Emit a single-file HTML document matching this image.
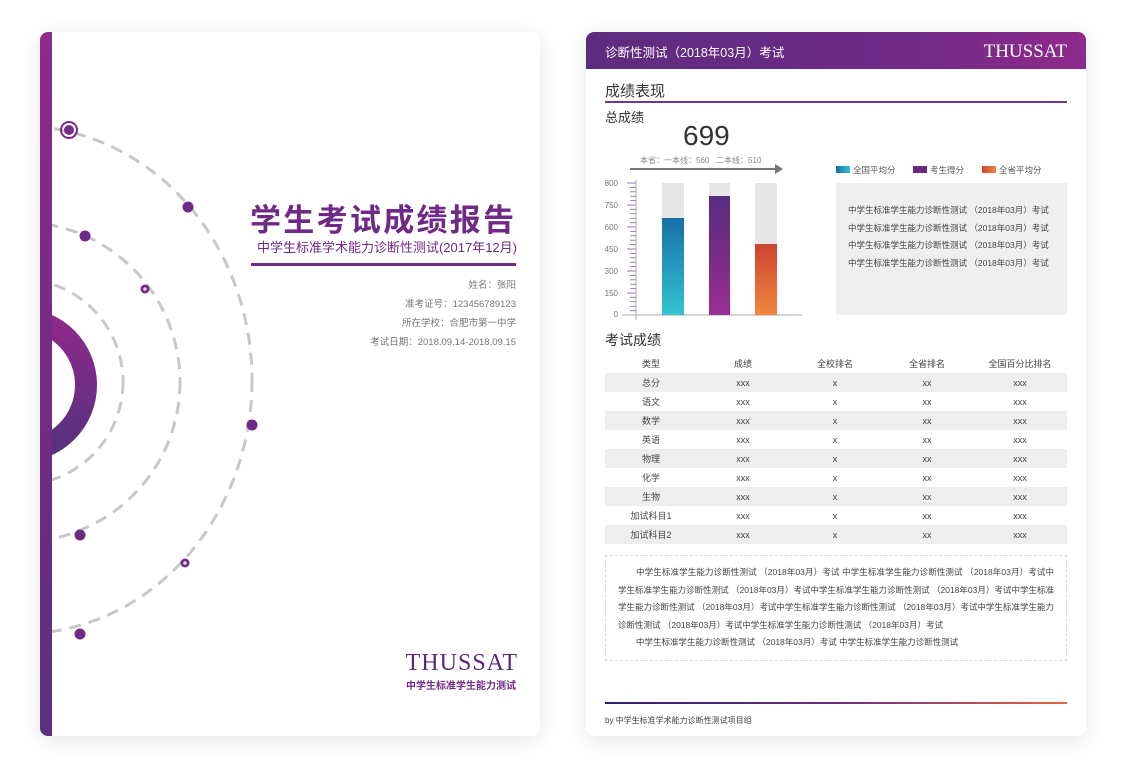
<!DOCTYPE html>
<html><head><meta charset="utf-8"><style>
*{margin:0;padding:0;box-sizing:border-box}
body{width:1126px;height:784px;background:#fff;position:relative;overflow:hidden;font-family:"Liberation Sans","Noto Sans CJK SC",sans-serif;}
.card{position:absolute;background:#fff;border-radius:8px;box-shadow:0 4px 22px rgba(0,0,0,0.10);overflow:hidden}
.a{position:absolute;white-space:nowrap}
.r{text-align:right}
table{border-collapse:collapse;width:462px;font-size:9px;color:#444}
td,th{height:19px;text-align:center;font-weight:normal}
tbody tr:nth-child(odd){background:#eeeeee}
</style></head><body>
<div class="card" style="left:40px;top:32px;width:500px;height:704px">
 <svg class="a" style="left:0;top:0" width="500" height="704">
  <defs><linearGradient id="rg" x1="0" y1="0" x2="0" y2="1"><stop offset="0" stop-color="#8e2a8c"/><stop offset="1" stop-color="#56317e"/></linearGradient></defs>
  <g transform="translate(-40,-32)">
  <ellipse cx="20" cy="380" rx="232" ry="254" fill="none" stroke="#c8c8c8" stroke-width="3" stroke-dasharray="12 8"/>
  <circle cx="20" cy="382" r="160" fill="none" stroke="#c8c8c8" stroke-width="3" stroke-dasharray="12 8"/>
  <circle cx="20" cy="382" r="103" fill="none" stroke="#c8c8c8" stroke-width="3" stroke-dasharray="12 8"/>
  <circle cx="20" cy="385" r="66" fill="none" stroke="url(#rg)" stroke-width="22"/>
  <circle cx="69" cy="130" r="8" fill="none" stroke="#7a2a88" stroke-width="2"/>
  <circle cx="69" cy="130" r="5" fill="#7a2a88"/>
  <circle cx="188" cy="207" r="5.5" fill="#6e2a86"/>
  <circle cx="85" cy="236" r="5.5" fill="#6e2a86"/>
  <circle cx="145" cy="289" r="4.5" fill="#6e2a86"/><circle cx="145" cy="289" r="1.8" fill="#ddd"/>
  <circle cx="252" cy="425" r="5.5" fill="#6e2a86"/>
  <circle cx="80" cy="535" r="5.5" fill="#6e2a86"/>
  <circle cx="185" cy="563" r="4.5" fill="#6e2a86"/><circle cx="185" cy="563" r="1.8" fill="#ddd"/>
  <circle cx="80" cy="634" r="5.5" fill="#6e2a86"/>
  </g>
 </svg>
 <div class="a" style="left:0;top:0;width:12px;height:704px;background:linear-gradient(#8e2a8c,#5a2e80)"></div>
 <div class="a" style="left:210px;top:163px;font-size:31px;color:#6f2a88;font-weight:bold;letter-spacing:2.3px">学生考试成绩报告</div>
 <div class="a r" style="right:23px;top:205px;font-size:13px;color:#6f2a88">中学生标准学术能力诊断性测试(2017年12月)</div>
 <div class="a" style="left:211px;top:231px;width:265px;height:3px;background:#6f2a88"></div>
 <div class="a r" style="right:24px;top:244px;font-size:9.5px;color:#777;line-height:19px">姓名：张阳<br>准考证号：123456789123<br>所在学校：合肥市第一中学<br>考试日期：2018.09.14-2018.09.15</div>
 <div class="a r" style="right:22px;top:618px;font-family:'Liberation Serif',serif;font-size:24px;color:#5a2a7e;letter-spacing:1px">THUSSAT</div>
 <div class="a r" style="right:24px;top:645px;font-size:10px;color:#6f2a88;font-weight:bold">中学生标准学生能力测试</div>
</div>

<div class="card" style="left:586px;top:32px;width:500px;height:704px">
 <div class="a" style="left:0;top:0;width:500px;height:37px;background:linear-gradient(90deg,#5d2c7f,#6e2a86 60%,#8e2a8c)"></div>
 <div class="a" style="left:19px;top:10px;font-size:12.5px;color:#fff">诊断性测试（2018年03月）考试</div>
 <div class="a" style="right:19px;top:9px;font-family:'Liberation Serif',serif;font-size:19px;color:#fff">THUSSAT</div>
 <div class="a" style="left:19px;top:48px;font-size:15px;color:#333">成绩表现</div>
 <div class="a" style="left:19px;top:69px;width:462px;height:2px;background:#6f3a8a"></div>
 <div class="a" style="left:19px;top:75px;font-size:13px;color:#333">总成绩</div>
 <div class="a" style="left:97px;top:88px;font-size:28px;color:#333">699</div>
 <div class="a" style="left:54px;top:123px;font-size:8px;color:#888">本省：一本线：560&nbsp;&nbsp;&nbsp;二本线：510</div>
 <div class="a" style="left:44px;top:136px;width:146px;height:2px;background:#777"></div>
 <div class="a" style="left:189px;top:132px;width:0;height:0;border-left:8px solid #777;border-top:5px solid transparent;border-bottom:5px solid transparent"></div>
 <svg class="a" style="left:0;top:108px" width="230" height="180">
  <defs>
   <linearGradient id="b1" x1="0" y1="0" x2="0" y2="1"><stop offset="0" stop-color="#1670a8"/><stop offset="1" stop-color="#35c3d2"/></linearGradient>
   <linearGradient id="b2" x1="0" y1="0" x2="0" y2="1"><stop offset="0" stop-color="#572c7e"/><stop offset="1" stop-color="#9a2d92"/></linearGradient>
   <linearGradient id="b3" x1="0" y1="0" x2="0" y2="1"><stop offset="0" stop-color="#cc4530"/><stop offset="1" stop-color="#f28640"/></linearGradient>
  </defs>
  <g font-size="8" fill="#777" text-anchor="end">
   <text x="32" y="46">800</text><text x="32" y="68">750</text><text x="32" y="90">600</text><text x="32" y="112">450</text><text x="32" y="134">300</text><text x="32" y="156">150</text><text x="32" y="177">0</text>
  </g>
  <g stroke="#9a7ab8" stroke-width="1">
   <line x1="41" y1="43" x2="50" y2="43"/><line x1="41" y1="65" x2="50" y2="65"/><line x1="41" y1="87" x2="50" y2="87"/><line x1="41" y1="109" x2="50" y2="109"/><line x1="41" y1="131" x2="50" y2="131"/><line x1="41" y1="153" x2="50" y2="153"/><line x1="36" y1="175" x2="50" y2="175"/>
   <path d="M44 47.4h6M44 51.8h6M44 56.2h6M44 60.6h6M44 69.4h6M44 73.8h6M44 78.2h6M44 82.6h6M44 91.4h6M44 95.8h6M44 100.2h6M44 104.6h6M44 113.4h6M44 117.8h6M44 122.2h6M44 126.6h6M44 135.4h6M44 139.8h6M44 144.2h6M44 148.6h6M44 157.4h6M44 161.8h6M44 166.2h6M44 170.6h6"/>
  </g>
  <line x1="50" y1="40" x2="50" y2="180" stroke="#aaa"/>
  <line x1="36" y1="175" x2="216" y2="175" stroke="#aaa"/>
  <rect x="76" y="43" width="22" height="132" fill="#e6e6e6"/><rect x="76" y="78" width="22" height="97" fill="url(#b1)"/>
  <rect x="123" y="43" width="21" height="132" fill="#e6e6e6"/><rect x="123" y="56" width="21" height="119" fill="url(#b2)"/>
  <rect x="169" y="43" width="22" height="132" fill="#e6e6e6"/><rect x="169" y="104" width="22" height="71" fill="url(#b3)"/>
 </svg>
 <div class="a" style="left:250px;top:134px;width:14px;height:7px;background:linear-gradient(90deg,#1670a8,#35c3d2)"></div>
 <div class="a" style="left:267px;top:132px;font-size:8.5px;color:#555">全国平均分</div>
 <div class="a" style="left:327px;top:134px;width:14px;height:7px;background:#6a2a86"></div>
 <div class="a" style="left:344px;top:132px;font-size:8.5px;color:#555">考生得分</div>
 <div class="a" style="left:396px;top:134px;width:14px;height:7px;background:linear-gradient(90deg,#cc4530,#f28640)"></div>
 <div class="a" style="left:413px;top:132px;font-size:8.5px;color:#555">全省平均分</div>
 <div class="a" style="left:250px;top:151px;width:231px;height:132px;background:#efefef"></div>
 <div class="a" style="left:262px;top:170px;font-size:8.5px;color:#444;line-height:17.5px">中学生标准学生能力诊断性测试 （2018年03月）考试<br>中学生标准学生能力诊断性测试 （2018年03月）考试<br>中学生标准学生能力诊断性测试 （2018年03月）考试<br>中学生标准学生能力诊断性测试 （2018年03月）考试</div>
 <div class="a" style="left:19px;top:298px;font-size:14px;color:#333">考试成绩</div>
 <div class="a" style="left:19px;top:322px">
 <table>
  <thead><tr><th style="width:92px">类型</th><th style="width:92px">成绩</th><th style="width:92px">全校排名</th><th style="width:92px">全省排名</th><th>全国百分比排名</th></tr></thead>
  <tbody>
  <tr><td>总分</td><td>xxx</td><td>x</td><td>xx</td><td>xxx</td></tr>
  <tr><td>语文</td><td>xxx</td><td>x</td><td>xx</td><td>xxx</td></tr>
  <tr><td>数学</td><td>xxx</td><td>x</td><td>xx</td><td>xxx</td></tr>
  <tr><td>英语</td><td>xxx</td><td>x</td><td>xx</td><td>xxx</td></tr>
  <tr><td>物理</td><td>xxx</td><td>x</td><td>xx</td><td>xxx</td></tr>
  <tr><td>化学</td><td>xxx</td><td>x</td><td>xx</td><td>xxx</td></tr>
  <tr><td>生物</td><td>xxx</td><td>x</td><td>xx</td><td>xxx</td></tr>
  <tr><td>加试科目1</td><td>xxx</td><td>x</td><td>xx</td><td>xxx</td></tr>
  <tr><td>加试科目2</td><td>xxx</td><td>x</td><td>xx</td><td>xxx</td></tr>
  </tbody>
 </table></div>
 <div class="a" style="left:19px;top:523px;width:462px;height:106px;border:1px dashed #d8d8d8;padding:8px 12px;font-size:8.5px;color:#444;line-height:17.5px;white-space:normal;text-align:justify">
  <p style="text-indent:18px">中学生标准学生能力诊断性测试 （2018年03月）考试 中学生标准学生能力诊断性测试 （2018年03月）考试中学生标准学生能力诊断性测试 （2018年03月）考试中学生标准学生能力诊断性测试 （2018年03月）考试中学生标准学生能力诊断性测试 （2018年03月）考试中学生标准学生能力诊断性测试 （2018年03月）考试中学生标准学生能力诊断性测试 （2018年03月）考试中学生标准学生能力诊断性测试 （2018年03月）考试</p>
  <p style="text-indent:18px">中学生标准学生能力诊断性测试 （2018年03月）考试 中学生标准学生能力诊断性测试</p>
 </div>
 <div class="a" style="left:19px;top:670px;width:462px;height:2px;background:linear-gradient(90deg,#2e1f6e,#6e2a86 50%,#e8643a)"></div>
 <div class="a" style="left:19px;top:683px;font-size:8px;color:#444">by 中学生标准学术能力诊断性测试项目组</div>
</div>
</body></html>
